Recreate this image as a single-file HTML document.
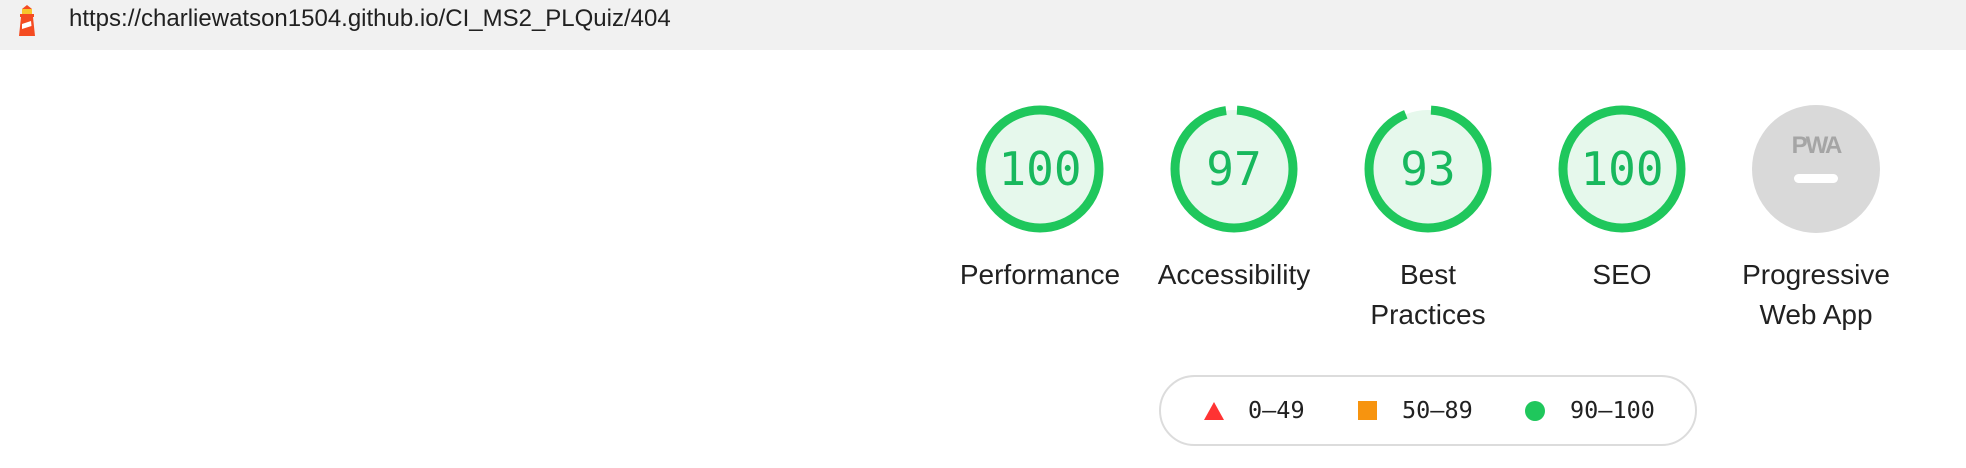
<!DOCTYPE html>
<html><head><meta charset="utf-8"><style>
body{margin:0;width:1966px;height:468px;background:#fff;position:relative;overflow:hidden;font-family:"Liberation Sans",sans-serif}
.bar{position:absolute;left:0;top:0;width:1966px;height:50px;background:#f1f1f1}
.url{position:absolute;left:69px;top:5px;font-size:24px;color:#212121;line-height:28px}
.g{position:absolute;top:105px;width:128px;height:128px}
.lbl{position:absolute;top:255px;width:220px;text-align:center;font-size:28px;line-height:40px;color:#212121}
.num{font-family:"DejaVu Sans Mono",monospace;font-size:46px;fill:#18b85d}
.legend{position:absolute;left:1159px;top:375px;width:538px;height:71px;border:2px solid #dcdcdc;border-radius:37px;box-sizing:border-box}
.lt{position:absolute;top:396px;font-family:"DejaVu Sans Mono",monospace;font-size:23.5px;color:#212121;line-height:28px}
</style></head><body>
<div class="bar"></div>
<svg style="position:absolute;left:12px;top:3px" width="30" height="34" viewBox="0 0 30 34">
<path d="M10 6 L15 2 L20 6 Z" fill="#f44b21"/>
<rect x="10" y="6" width="10" height="5" fill="#f7c52b"/>
<rect x="8" y="11" width="14" height="3" fill="#f44b21"/>
<path d="M9 14 H21 L23 33 H7 Z" fill="#f44b21"/>
<path d="M10 21 L19 18 L19.5 23 L10 26 Z" fill="#fff"/>
</svg>
<div class="url">https://charliewatson1504.github.io/CI_MS2_PLQuiz/404</div>

<svg class="g" style="left:976px" viewBox="0 0 128 128"><circle cx="64" cy="64" r="59" fill="#e6f8ec"/><circle cx="64" cy="64" r="59" fill="none" stroke="#1fc75c" stroke-width="9"/><text x="64" y="80" text-anchor="middle" class="num">100</text></svg>
<svg class="g" style="left:1170px" viewBox="0 0 128 128"><circle cx="64" cy="64" r="59" fill="#e6f8ec"/><circle cx="64" cy="64" r="59" fill="none" stroke="#1fc75c" stroke-width="9" stroke-dasharray="359.6 371" stroke-dashoffset="-3" transform="rotate(-90 64 64)"/><text x="64" y="80" text-anchor="middle" class="num">97</text></svg>
<svg class="g" style="left:1364px" viewBox="0 0 128 128"><circle cx="64" cy="64" r="59" fill="#e6f8ec"/><circle cx="64" cy="64" r="59" fill="none" stroke="#1fc75c" stroke-width="9" stroke-dasharray="344.8 371" stroke-dashoffset="-3" transform="rotate(-90 64 64)"/><text x="64" y="80" text-anchor="middle" class="num">93</text></svg>
<svg class="g" style="left:1558px" viewBox="0 0 128 128"><circle cx="64" cy="64" r="59" fill="#e6f8ec"/><circle cx="64" cy="64" r="59" fill="none" stroke="#1fc75c" stroke-width="9"/><text x="64" y="80" text-anchor="middle" class="num">100</text></svg>
<svg class="g" style="left:1752px" viewBox="0 0 128 128"><circle cx="64" cy="64" r="64" fill="#d9d9d9"/><text x="64" y="48" text-anchor="middle" font-family="Liberation Sans,sans-serif" font-weight="bold" font-size="24" fill="#a5a5a5" letter-spacing="-2">PWA</text><rect x="42" y="69" width="44" height="9" rx="4.5" fill="#fff"/></svg>

<div class="lbl" style="left:930px">Performance</div>
<div class="lbl" style="left:1124px">Accessibility</div>
<div class="lbl" style="left:1318px">Best<br>Practices</div>
<div class="lbl" style="left:1512px">SEO</div>
<div class="lbl" style="left:1706px">Progressive<br>Web App</div>

<div class="legend"></div>
<svg style="position:absolute;left:1203px;top:401px" width="22" height="20"><path d="M11 1 L21 19 H1 Z" fill="#f33"/></svg>
<div class="lt" style="left:1248px">0–49</div>
<div style="position:absolute;left:1358px;top:401px;width:19px;height:19px;background:#f7940f"></div>
<div class="lt" style="left:1402px">50–89</div>
<div style="position:absolute;left:1525px;top:401px;width:20px;height:20px;border-radius:50%;background:#1fc75c"></div>
<div class="lt" style="left:1570px">90–100</div>
</body></html>
